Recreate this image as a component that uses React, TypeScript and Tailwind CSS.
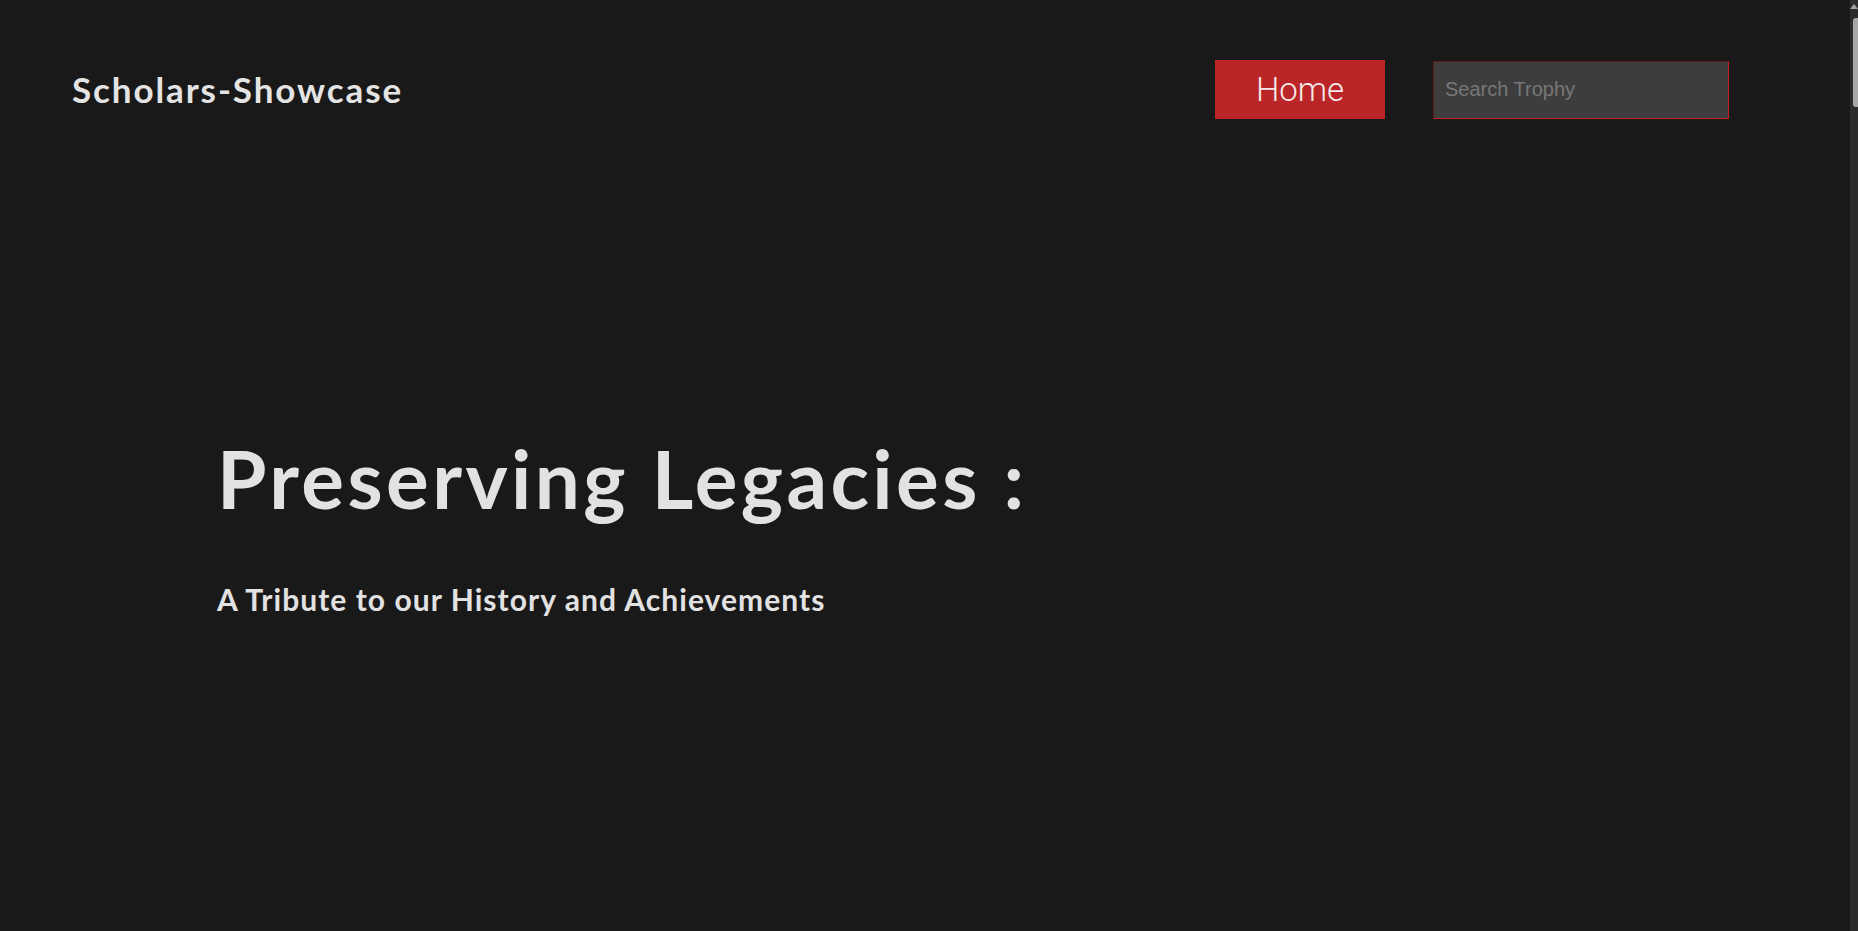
import React from "react";

export default function App() {
  return (
    <div className="flex h-[931px] w-full overflow-hidden bg-[#191919]">
      <main className="flex flex-1 flex-col">
        <header className="flex h-[179px] items-center justify-between pl-[72px] pr-[121px]">
          <div
            className="text-[35px] font-bold leading-none tracking-[1.9px] text-[#e4e4e4]"
            style={{ fontFamily: "Lato, 'Noto Sans', sans-serif" }}
          >
            Scholars-Showcase
          </div>
          <nav className="flex items-center gap-12">
            <a
              href="#"
              className="flex h-[59px] w-[170px] items-center justify-center bg-[#bb2528] text-[33px] font-light text-[#f4e8ea]"
              style={{ fontFamily: "Roboto, 'Liberation Sans', sans-serif" }}
            >
              Home
            </a>
            <input
              type="text"
              placeholder="Search Trophy"
              className="h-[58px] w-[296px] border border-t-[#5e1b1c] border-l-[#5e1b1c] border-r-[#c41f25] border-b-[#c41f25] bg-[#3d3d3d] pl-[11px] text-[20px] text-[#ddd] outline-none placeholder:text-[#777]"
              style={{ fontFamily: "'Liberation Sans', Arial, sans-serif" }}
            />
          </nav>
        </header>
        <section
          className="flex flex-col pl-[217px] pt-[259px]"
          style={{ fontFamily: "Lato, 'Noto Sans', sans-serif" }}
        >
          <h1 className="text-[80px] font-bold leading-none tracking-[3.4px] text-[#e2e2e2]">
            Preserving Legacies :
          </h1>
          <h2 className="mt-[66px] text-[30px] font-bold leading-none tracking-[1.05px] text-[#e2e2e2]">
            A Tribute to our History and Achievements
          </h2>
        </section>
      </main>
      <aside className="flex w-2 flex-col bg-[#2c2c2c]">
        <div className="flex h-[14px] items-start justify-end">
          <div className="mt-[4px] h-0 w-0 border-x-[4px] border-b-[5px] border-x-transparent border-b-[#a3a3a3]" />
        </div>
        <div className="ml-[3px] mt-[4px] h-[89px] rounded-l-[3px] bg-[#a8a8a8]" />
      </aside>
    </div>
  );
}
